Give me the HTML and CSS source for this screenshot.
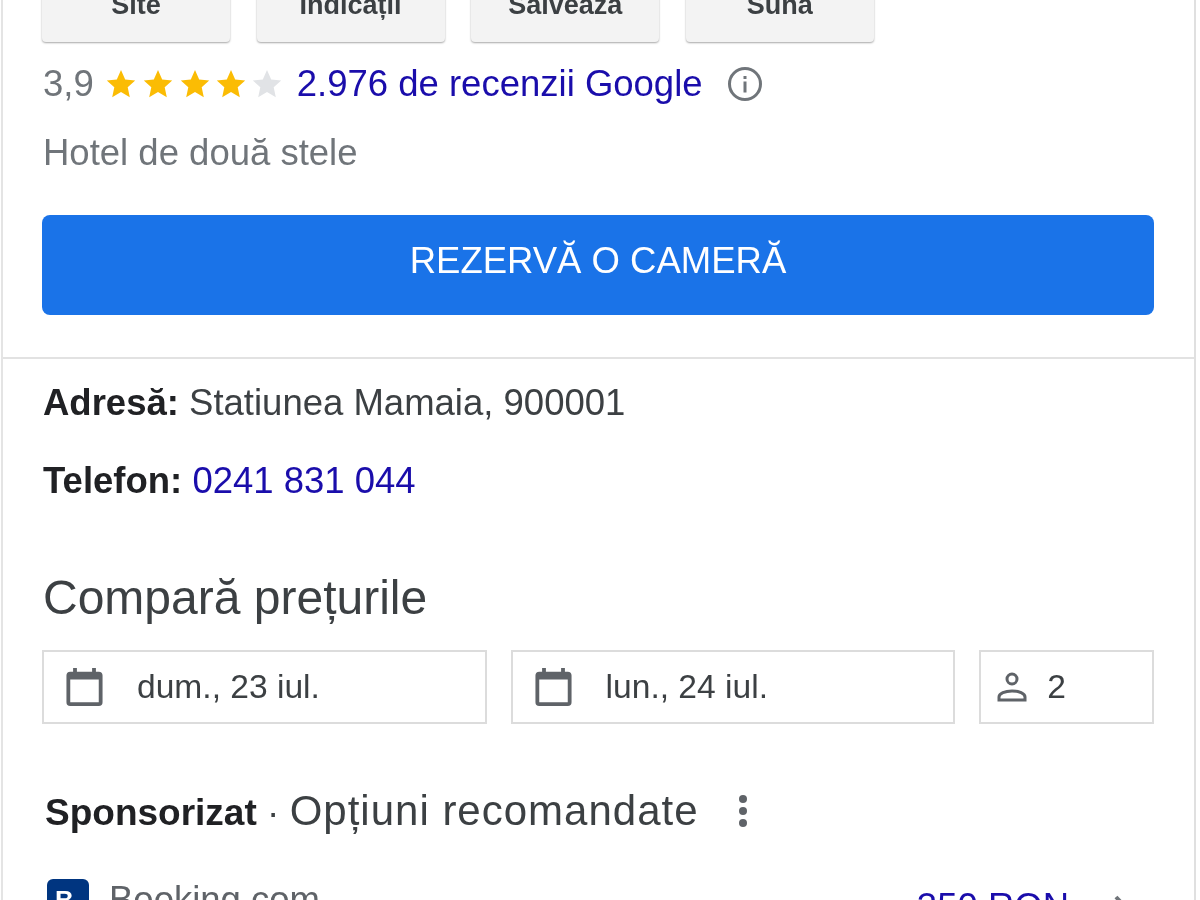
FILE: index.html
```html
<!DOCTYPE html>
<html lang="ro">
<head>
    <meta charset="UTF-8">
    <meta name="viewport" content="width=device-width, initial-scale=1.0">
    <title>Hotel</title>
    <link rel="stylesheet" href="styles.css">
</head>
<body>
    <div class="card">
        <div class="top">
            <div class="actions">
                <div class="action">Site</div>
                <div class="action">Indicații</div>
                <div class="action">Salvează</div>
                <div class="action">Sună</div>
            </div>
            <div class="rating">
                <span class="score">3,9</span>
                <svg class="stars" width="178" height="32" viewBox="0 0 178 32">
                    <path id="star" fill="#fbbc04" d="M15 2l4.200 9.400 10 1-7.500 6.800 2.100 10L15 24l-8.800 5.200 2.100-10L.8 12.400l10-1z"/>
                    <use href="#star" x="37"/>
                    <use href="#star" x="74"/>
                    <use href="#star" x="110"/>
                    <path fill="#e1e3e6" transform="translate(146)" d="M15 2l4.200 9.400 10 1-7.500 6.800 2.100 10L15 24l-8.800 5.200 2.100-10L.8 12.400l10-1z"/>
                </svg>
                <a class="link reviews">2.976 de recenzii Google</a>
                <svg class="info" width="36" height="36" viewBox="0 0 36 36">
                    <circle cx="18" cy="18" r="15.500" fill="none" stroke="#70757a" stroke-width="3"/>
                    <rect x="16.500" y="15.500" width="3" height="11" fill="#70757a"/>
                    <rect x="16.500" y="10" width="3" height="3" fill="#70757a"/>
                </svg>
            </div>
            <div class="category">Hotel de două stele</div>
            <div class="book">REZERVĂ O CAMERĂ</div>
        </div>
        <div class="details">
            <div class="address"><b>Adresă:</b> Statiunea Mamaia, 900001</div>
            <div class="phone"><b>Telefon:</b> <a class="link">0241 831 044</a></div>
            <h2 class="compare">Compară prețurile</h2>
            <div class="filters">
                <div class="field date">
                    <svg width="37" height="38" viewBox="0 0 38 40"><path fill="#5f6368" d="M7 0h4v4h16V0h4v4h3a4 4 0 0 1 4 4v28a4 4 0 0 1-4 4H4a4 4 0 0 1-4-4V8a4 4 0 0 1 4-4h3zM4 12v24h30V12z"/></svg>
                    <span>dum., 23 iul.</span>
                </div>
                <div class="field date">
                    <svg width="37" height="38" viewBox="0 0 38 40"><path fill="#5f6368" d="M7 0h4v4h16V0h4v4h3a4 4 0 0 1 4 4v28a4 4 0 0 1-4 4H4a4 4 0 0 1-4-4V8a4 4 0 0 1 4-4h3zM4 12v24h30V12z"/></svg>
                    <span>lun., 24 iul.</span>
                </div>
                <div class="field guests">
                    <svg width="30" height="30" viewBox="0 0 30 30" fill="none" stroke="#5f6368" stroke-width="3"><circle cx="15" cy="7" r="5"/><path d="M2 28v-3c0-3.500 6-6 13-6s13 2.500 13 6v3z"/></svg>
                    <span>2</span>
                </div>
            </div>
            <div class="sponsored">
                <span><b>Sponsorizat</b> · <span class="recommended">Opțiuni recomandate</span></span>
                <svg width="10" height="32" viewBox="0 0 10 32"><circle cx="5" cy="4" r="4" fill="#5f6368"/><circle cx="5" cy="16" r="4" fill="#5f6368"/><circle cx="5" cy="28" r="4" fill="#5f6368"/></svg>
            </div>
            <div class="offer">
                <div class="logo">B.</div>
                <div class="partner">Booking.com</div>
                <a class="link price">350 RON</a>
                <svg class="chev" width="20" height="36" viewBox="0 0 20 36"><path d="M3 3l14 15L3 33" fill="none" stroke="#70757a" stroke-width="4"/></svg>
            </div>
        </div>
    </div>
</body>
</html>
```
FILE: styles.css
```css
html, body {
    height: 900px;
    overflow: hidden;
}

body {
    margin: 0;
    background: #fff;
    font-family: "Liberation Sans", Arial, sans-serif;
    color: #202124;
}

.card {
    margin: -30px 0 0 1px;
    width: 1195px;
    height: 1000px;
    border-left: 2px solid #e4e4e4;
    border-right: 2px solid #e0e0e0;
    box-sizing: border-box;
    filter: blur(0.5px);
}

.top {
    padding: 0 40px 0 39px;
    height: 389px;
    box-sizing: border-box;
    border-bottom: 2px solid #e2e2e2;
}

.actions {
    display: flex;
    gap: 26.6px;
}

.action {
    width: 188px;
    height: 72px;
    box-sizing: border-box;
    padding-top: 20px;
    text-align: center;
    background: #f3f3f3;
    border-radius: 4px;
    box-shadow: 0 1px 2px rgba(0, 0, 0, 0.35);
    font-size: 27px;
    font-weight: bold;
    color: #3c4043;
}

.rating {
    display: flex;
    align-items: center;
    margin: 23px 0 0 1px;
    height: 38px;
    font-size: 36.5px;
}

.score {
    color: #70757a;
    margin-right: 12px;
}

.stars {
    margin-right: 13px;
}

.link {
    color: #1a0dab;
}

.info {
    margin-left: 24px;
}

.category {
    margin: 29px 0 0 1px;
    font-size: 36.5px;
    color: #70757a;
}

.book {
    margin-top: 41px;
    height: 100px;
    line-height: 92px;
    text-align: center;
    color: #fff;
    font-size: 36.5px;
    background: #1a73e8;
    border-radius: 8px;
}

.details {
    padding: 0 40px 0 39px;
    font-size: 36.5px;
    color: #3c4043;
}

.details b {
    color: #202124;
}

.address {
    margin: 23px 0 0 1px;
}

.phone {
    margin: 36px 0 0 1px;
}

.compare {
    margin: 68px 0 0 1px;
    font-size: 48px;
    font-weight: normal;
}

.filters {
    display: flex;
    gap: 24px;
    margin-top: 25px;
}

.field {
    display: flex;
    align-items: center;
    height: 74px;
    box-sizing: border-box;
    border: 2px solid #dcdcdc;
    color: #3c4043;
    font-size: 33.6px;
}

.date {
    width: 445px;
    padding-left: 22px;
    gap: 34px;
}

.guests {
    width: 175px;
    padding-left: 16px;
    gap: 20px;
}

.sponsored {
    display: flex;
    align-items: center;
    gap: 39px;
    margin-top: 63px;
    margin-left: 3px;
    font-size: 37px;
}

.recommended {
    font-size: 42px;
    letter-spacing: 1px;
}

.offer {
    display: flex;
    align-items: center;
    margin-top: 35px;
}

.logo {
    width: 42px;
    height: 42px;
    line-height: 42px;
    margin-left: 5px;
    text-align: center;
    background: #003580;
    color: #fff;
    border-radius: 6px;
    font-size: 26px;
    font-weight: bold;
}

.partner {
    margin-left: 20px;
    flex: 1;
    color: #5f6368;
}

.price {
    font-size: 36.5px;
    margin-top: 14px;
}

.chev {
    margin: 24px 21px 0 44px;
}
```
